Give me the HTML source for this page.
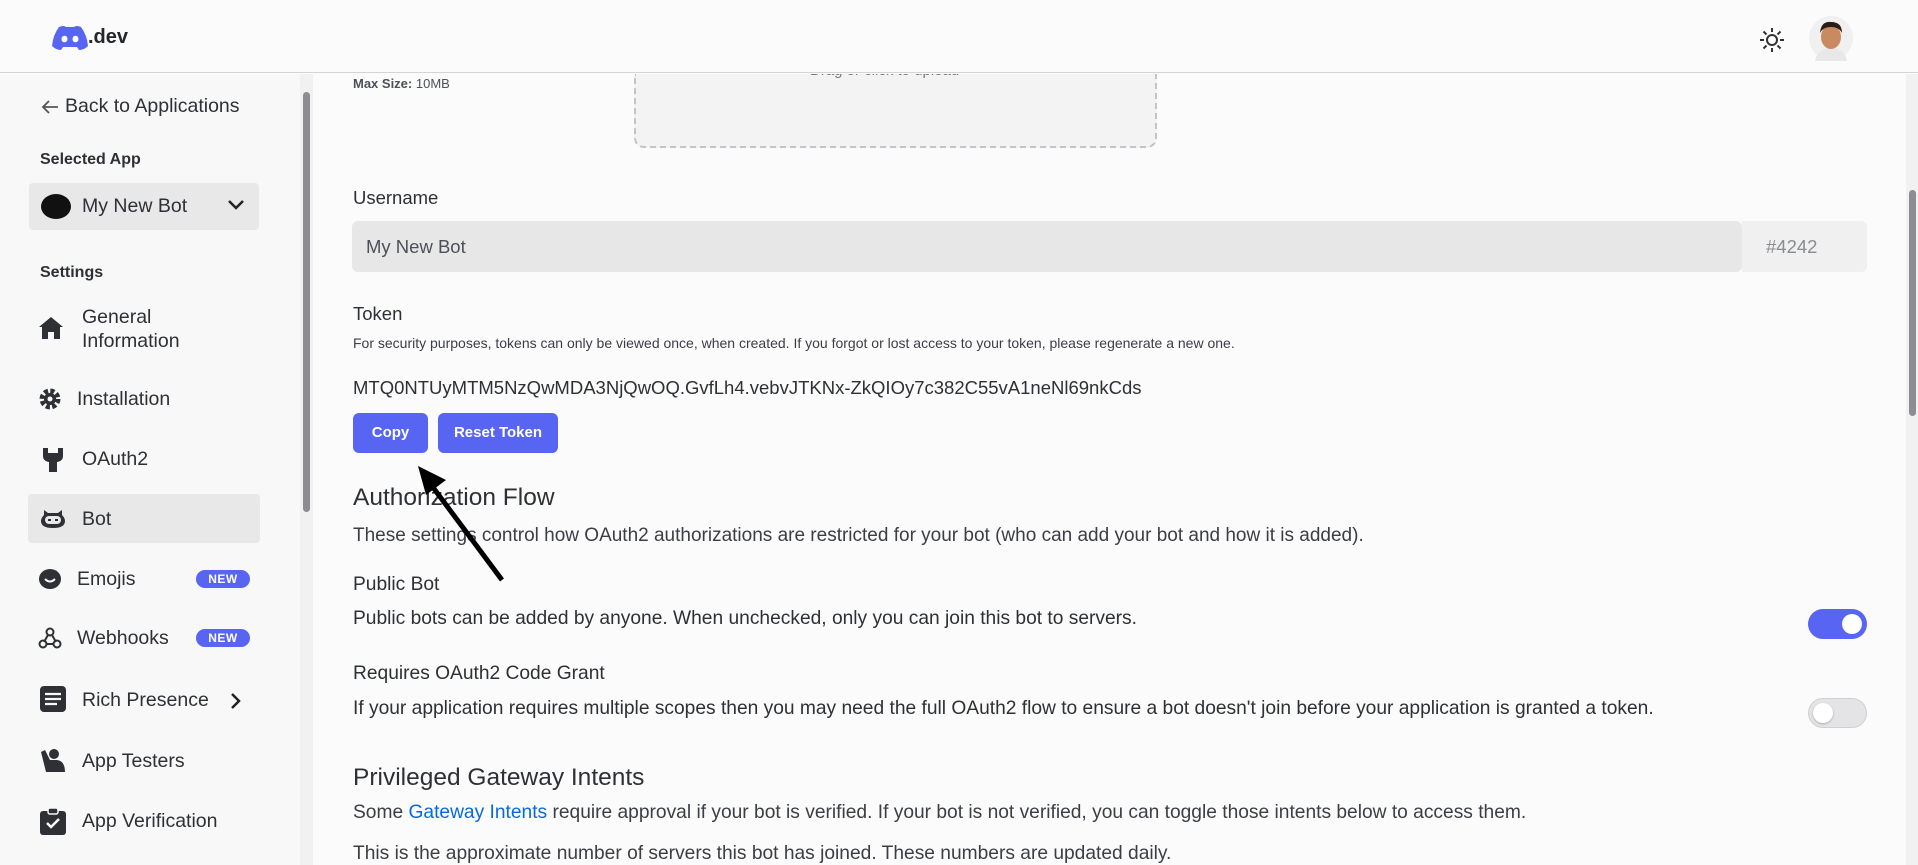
<!DOCTYPE html>
<html><head><meta charset="utf-8"><style>
*{margin:0;padding:0;box-sizing:border-box}
body{width:1918px;height:865px;overflow:hidden;background:#fbfbfb;font-family:"Liberation Sans",sans-serif;color:#2e3035;position:relative}
.a{position:absolute;white-space:nowrap}
.hdr{position:absolute;left:0;top:0;width:1918px;height:73px;background:#fbfbfb;border-bottom:1px solid #d4d4d6}
.side{position:absolute;left:0;top:74px;width:300px;height:791px;background:#f8f8f8}
.si{position:absolute;left:82px;font-size:19.5px;color:#2e3035}
.ic{position:absolute;left:38px}
.new{position:absolute;left:196px;width:54px;height:18px;border-radius:9px;background:#5865f2;color:#fff;font-size:12px;font-weight:bold;text-align:center;line-height:18px;letter-spacing:.5px}
.btn{position:absolute;top:413px;height:40px;background:#5865f2;color:#fff;font-size:15px;font-weight:bold;border-radius:6px;text-align:center;line-height:40px}
.tog{position:absolute;left:1808px;width:59px;height:30px;border-radius:15px}
.tog i{position:absolute;top:5px;width:20px;height:20px;border-radius:50%;background:#fff}
.t{font-size:19.2px}
</style></head><body>
<div class="a" style="left:634px;top:74px;width:523px;height:74px;border:2px dashed #c4c4c8;border-top:none;border-radius:0 0 10px 10px;background:#f3f3f3"></div>
<div class="a" style="left:810px;top:62px;font-size:15px;color:#777;clip-path:inset(12px 0 0 0)">Drag or click to upload</div>
<div class="hdr"></div>
<svg class="a" style="left:51px;top:25px" width="38" height="26" viewBox="0 0 38 26"><path d="M8 2 Q13 0 15 2 L23 2 Q25 0 30 2 Q36 10 37 21 Q33 25 28 25 L26 22 L12 22 L10 25 Q5 25 1 21 Q2 10 8 2Z" fill="#5865f2"/><ellipse cx="13.5" cy="14" rx="3" ry="3.3" fill="#fff"/><ellipse cx="24.5" cy="14" rx="3" ry="3.3" fill="#fff"/></svg>
<div class="a" style="left:88px;top:26px;font-size:20px;font-weight:bold;color:#23272a">.dev</div>
<svg class="a" style="left:1758px;top:26px" width="28" height="28" viewBox="0 0 28 28" stroke="#333" stroke-width="2" fill="none"><circle cx="14" cy="14" r="5"/><path d="M14 2v4M14 22v4M2 14h4M22 14h4M5.5 5.5l3 3M19.5 19.5l3 3M5.5 22.5l3-3M19.5 8.5l3-3"/></svg>
<svg class="a" style="left:1809px;top:15px" width="44" height="46" viewBox="0 0 44 46"><circle cx="22" cy="23" r="22" fill="#f0f0f0"/><path d="M6 46 Q8 34 22 33 Q36 34 38 46Z" fill="#e8e8e8"/><ellipse cx="22" cy="22" rx="10" ry="12" fill="#c98a62"/><path d="M11 18 Q12 6 22 7 Q33 7 33 18 Q30 12 22 12 Q14 12 11 18Z" fill="#2b1d16"/></svg>
<div class="side"></div>
<div class="a" style="left:300px;top:74px;width:13px;height:791px;background:#f1f1f1"></div>
<div class="a" style="left:303px;top:92px;width:7px;height:420px;background:#8c8c91;border-radius:4px"></div>
<div class="a" style="left:1906px;top:74px;width:12px;height:791px;background:#f1f1f1"></div>
<div class="a" style="left:1909px;top:190px;width:7px;height:226px;background:#8c8c91;border-radius:4px"></div>
<svg class="a" style="left:41px;top:99px" width="18" height="16" viewBox="0 0 18 16"><path d="M17 8H2M8 2L2 8l6 6" stroke="#555" stroke-width="1.8" fill="none"/></svg>
<div class="si" style="left:65px;top:95px">Back to Applications</div>
<div class="a" style="left:40px;top:151px;font-size:16px;font-weight:bold">Selected App</div>
<div class="a" style="left:29px;top:183px;width:230px;height:47px;background:#e8e8e9;border-radius:4px"></div>
<div class="a" style="left:41px;top:194px;width:30px;height:25px;border-radius:50%;background:#111"></div>
<div class="si" style="top:195px">My New Bot</div>
<svg class="a" style="left:227px;top:199px" width="18" height="12" viewBox="0 0 18 12"><path d="M2 2l7 7 7-7" stroke="#222" stroke-width="2.5" fill="none"/></svg>
<div class="a" style="left:40px;top:264px;font-size:16px;font-weight:bold">Settings</div>
<svg class="ic" style="top:316px" width="26" height="24" viewBox="0 0 26 24"><path d="M13 1L1 11h3v12h6v-7h6v7h6V11h3Z" fill="#2e3035"/></svg>
<div class="si" style="top:305px;line-height:24px">General<br>Information</div>
<svg class="ic" style="top:387px" width="24" height="24" viewBox="0 0 24 24"><circle cx="12" cy="12" r="8" fill="none" stroke="#2e3035" stroke-width="5" stroke-dasharray="4 2.3"/><circle cx="12" cy="12" r="6" fill="#2e3035"/><circle cx="12" cy="12" r="2.5" fill="#f8f8f8"/></svg>
<div class="si" style="left:77px;top:388px">Installation</div>
<svg class="ic" style="top:446px;left:42px" width="22" height="26" viewBox="0 0 22 26"><path d="M1 2h5v5h10V2h5v8q0 5-6 6v10H7V16q-6-1-6-6Z" fill="#2e3035"/></svg>
<div class="si" style="top:448px">OAuth2</div>
<div class="a" style="left:28px;top:494px;width:232px;height:49px;background:#e8e8e9;border-radius:4px"></div>
<svg class="ic" style="top:507px;left:40px" width="26" height="22" viewBox="0 0 26 22"><path d="M4 3l4 3h10l4-3v5q3 3 3 6 0 7-12 7T1 14q0-3 3-6Z" fill="#2e3035"/><rect x="5" y="9" width="16" height="8" rx="4" fill="#e8e8e9"/><path d="M8 13h3M15 13h3" stroke="#2e3035" stroke-width="2"/></svg>
<div class="si" style="top:508px">Bot</div>
<svg class="ic" style="top:568px" width="24" height="22" viewBox="0 0 24 22"><ellipse cx="12" cy="11" rx="11" ry="10" fill="#2e3035"/><path d="M7 11q5 5 10 0" stroke="#f8f8f8" stroke-width="2" fill="none"/></svg>
<div class="si" style="left:77px;top:568px">Emojis</div>
<div class="new" style="top:570px">NEW</div>
<svg class="ic" style="top:626px" width="24" height="24" viewBox="0 0 24 24" fill="none" stroke="#2e3035" stroke-width="2"><circle cx="12" cy="6" r="3.5"/><circle cx="5" cy="18" r="3.5"/><circle cx="19" cy="18" r="3.5"/><path d="M10 9l-4 7M14 9l4 7M8.5 18h7"/></svg>
<div class="si" style="left:77px;top:627px">Webhooks</div>
<div class="new" style="top:629px">NEW</div>
<svg class="ic" style="top:686px;left:40px" width="26" height="26" viewBox="0 0 26 26"><rect x="0" y="0" width="26" height="26" rx="4" fill="#2e3035"/><path d="M5 8h16M5 13h16M5 18h12" stroke="#f8f8f8" stroke-width="2.2"/></svg>
<div class="si" style="top:689px">Rich Presence</div>
<svg class="a" style="left:230px;top:692px" width="12" height="18" viewBox="0 0 12 18"><path d="M2 2l7 7-7 7" stroke="#222" stroke-width="2.5" fill="none"/></svg>
<svg class="ic" style="top:748px;left:40px" width="26" height="26" viewBox="0 0 26 26"><circle cx="14" cy="6" r="5" fill="#2e3035"/><path d="M1 4l4-2 5 10h7q8 1 8 12H6Z" fill="#2e3035"/></svg>
<div class="si" style="top:750px">App Testers</div>
<svg class="ic" style="top:807px;left:40px" width="26" height="28" viewBox="0 0 26 28"><rect x="0" y="4" width="26" height="24" rx="3" fill="#2e3035"/><rect x="8" y="1" width="10" height="6" rx="2" fill="#2e3035" stroke="#f8f8f8" stroke-width="1.5"/><path d="M7 16l4 4 8-8" stroke="#f8f8f8" stroke-width="2.5" fill="none"/></svg>
<div class="si" style="top:810px">App Verification</div>

<div class="a" style="left:353px;top:76px;font-size:13px;color:#4e5058"><b>Max Size:</b> 10MB</div>
<div class="a" style="left:353px;top:187px;font-size:18.5px">Username</div>
<div class="a" style="left:352px;top:221px;width:1390px;height:51px;background:#e7e7e8;border-radius:6px"></div>
<div class="a" style="left:1742px;top:221px;width:125px;height:51px;background:#f0f0f1;border-radius:0 6px 6px 0"></div>
<div class="a" style="left:366px;top:236px;font-size:18.5px;color:#4e5058">My New Bot</div>
<div class="a" style="left:1766px;top:236px;font-size:18.5px;color:#8a8c91">#4242</div>
<div class="a" style="left:353px;top:303px;font-size:18.5px">Token</div>
<div class="a" style="left:353px;top:335px;font-size:14px;color:#3c3e44">For security purposes, tokens can only be viewed once, when created. If you forgot or lost access to your token, please regenerate a new one.</div>
<div class="a" style="left:353px;top:377px;font-size:18.5px;color:#2e3035">MTQ0NTUyMTM5NzQwMDA3NjQwOQ.GvfLh4.vebvJTKNx-ZkQIOy7c382C55vA1neNl69nkCds</div>
<div class="btn" style="left:353px;width:75px">Copy</div>
<div class="btn" style="left:438px;width:120px">Reset Token</div>
<div class="a" style="left:353px;top:484px;font-size:24.5px">Authorization Flow</div>
<div class="a" style="left:353px;top:525px;font-size:19px;color:#3c3e44">These settings control how OAuth2 authorizations are restricted for your bot (who can add your bot and how it is added).</div>
<div class="a t" style="left:353px;top:574px">Public Bot</div>
<div class="a t" style="left:353px;top:608px">Public bots can be added by anyone. When unchecked, only you can join this bot to servers.</div>
<div class="tog" style="top:609px;background:#5865f2"><i style="left:34px"></i></div>
<div class="a t" style="left:353px;top:663px">Requires OAuth2 Code Grant</div>
<div class="a t" style="left:353px;top:698px">If your application requires multiple scopes then you may need the full OAuth2 flow to ensure a bot doesn't join before your application is granted a token.</div>
<div class="tog" style="top:698px;background:#e4e4e6;border:1px solid #d0d0d3"><i style="left:4px;top:4px;box-shadow:0 1px 2px #aaa"></i></div>
<div class="a" style="left:353px;top:764px;font-size:24.5px">Privileged Gateway Intents</div>
<div class="a t" style="left:353px;top:802px;color:#3c3e44">Some <span style="color:#0969da">Gateway Intents</span> require approval if your bot is verified. If your bot is not verified, you can toggle those intents below to access them.</div>
<div class="a t" style="left:353px;top:843px;color:#3c3e44">This is the approximate number of servers this bot has joined. These numbers are updated daily.</div>
<svg class="a" style="left:0;top:0" width="1918" height="865"><path d="M502 580L432 486" stroke="#000" stroke-width="5"/><path d="M418 466L446 480L426 495Z" fill="#000"/></svg>
</body></html>
